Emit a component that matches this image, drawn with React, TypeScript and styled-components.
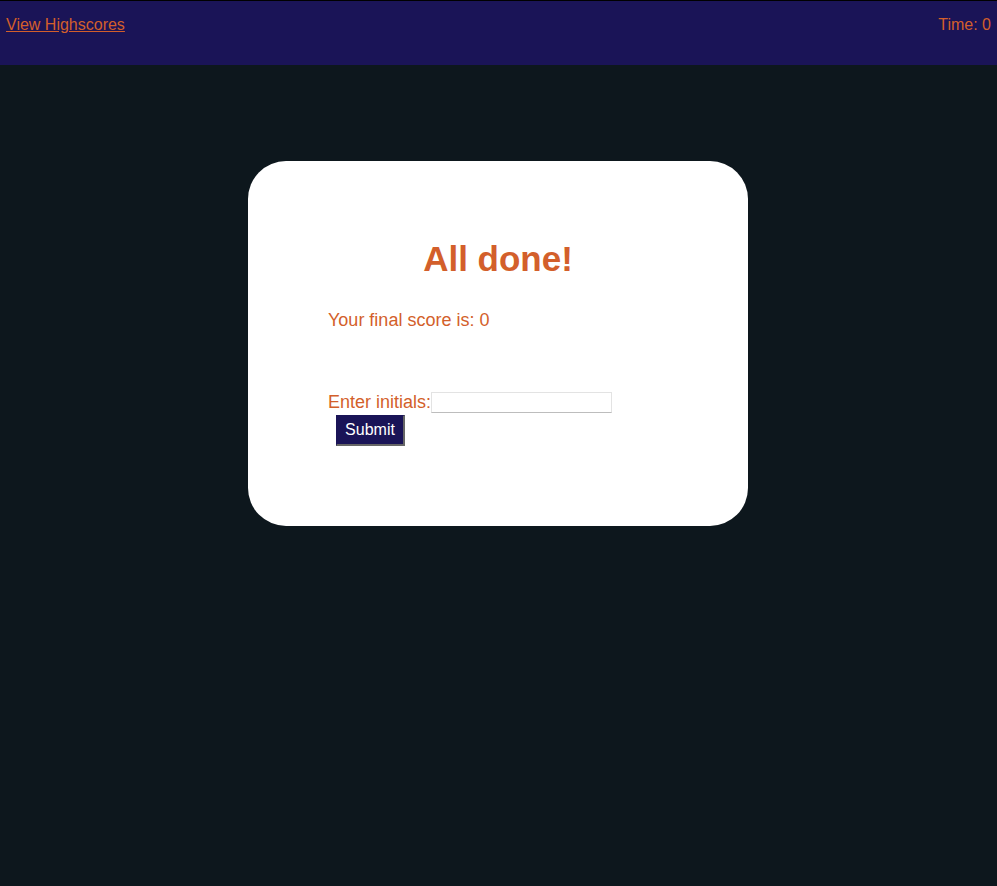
import React from "react";
import styled, { createGlobalStyle } from "styled-components";

const GlobalStyle = createGlobalStyle`
  html, body {
    margin: 0;
    padding: 0;
    background: #0d171d;
    font-family: "Liberation Sans", Arial, sans-serif;
  }
`;

const Header = styled.header`
  box-sizing: border-box;
  height: 65px;
  border-top: 1px solid #000;
  background: #1a1457;
  display: flex;
  justify-content: space-between;
  align-items: flex-start;
  padding: 15px 6px 0 6px;
  font-size: 16px;
  color: #d35f2b;
`;

const HighscoreLink = styled.a`
  color: #d35f2b;
  text-decoration: underline;
  cursor: pointer;
`;

const Timer = styled.div`
  color: #d35f2b;
`;

const Card = styled.section`
  box-sizing: border-box;
  width: 500px;
  margin: 96px 0 0 248px;
  background: #fff;
  border-radius: 38px;
  padding: 77px 80px 80px;
  color: #d35f2b;
`;

const Title = styled.h1`
  margin: 0;
  text-align: center;
  font-size: 35px;
  font-weight: bold;
  line-height: 41px;
`;

const Score = styled.p`
  margin: 31px 0 0;
  font-size: 18px;
  line-height: 21px;
`;

const Form = styled.form`
  margin-top: 61px;
  font-size: 18px;
`;

const Row = styled.div`
  display: flex;
  align-items: flex-end;
  line-height: 21px;
`;

const Input = styled.input`
  box-sizing: border-box;
  width: 181px;
  height: 21px;
  margin: 0;
  border: 1px solid #e3e3e3;
  border-bottom-color: #bdbdbd;
  background: #fff;
  padding: 0 4px;
  font-size: 14px;
`;

const SubmitButton = styled.button`
  box-sizing: border-box;
  display: block;
  margin: 2px 0 0 8px;
  width: 69px;
  height: 31px;
  background: #1a1457;
  color: #fff;
  font-family: "Liberation Sans", Arial, sans-serif;
  font-size: 16px;
  border-style: solid;
  border-width: 1px 2px 2px 1px;
  border-color: #1a1457 #666 #666 #1a1457;
  padding: 0;
  cursor: pointer;
`;

export default function App() {
  return (
    <>
      <GlobalStyle />
      <Header>
        <HighscoreLink>View Highscores</HighscoreLink>
        <Timer>Time: 0</Timer>
      </Header>
      <Card>
        <Title>All done!</Title>
        <Score>Your final score is: 0</Score>
        <Form onSubmit={(e) => e.preventDefault()}>
          <Row>
            <label htmlFor="initials">Enter initials:</label>
            <Input id="initials" type="text" />
          </Row>
          <SubmitButton type="submit">Submit</SubmitButton>
        </Form>
      </Card>
    </>
  );
}
